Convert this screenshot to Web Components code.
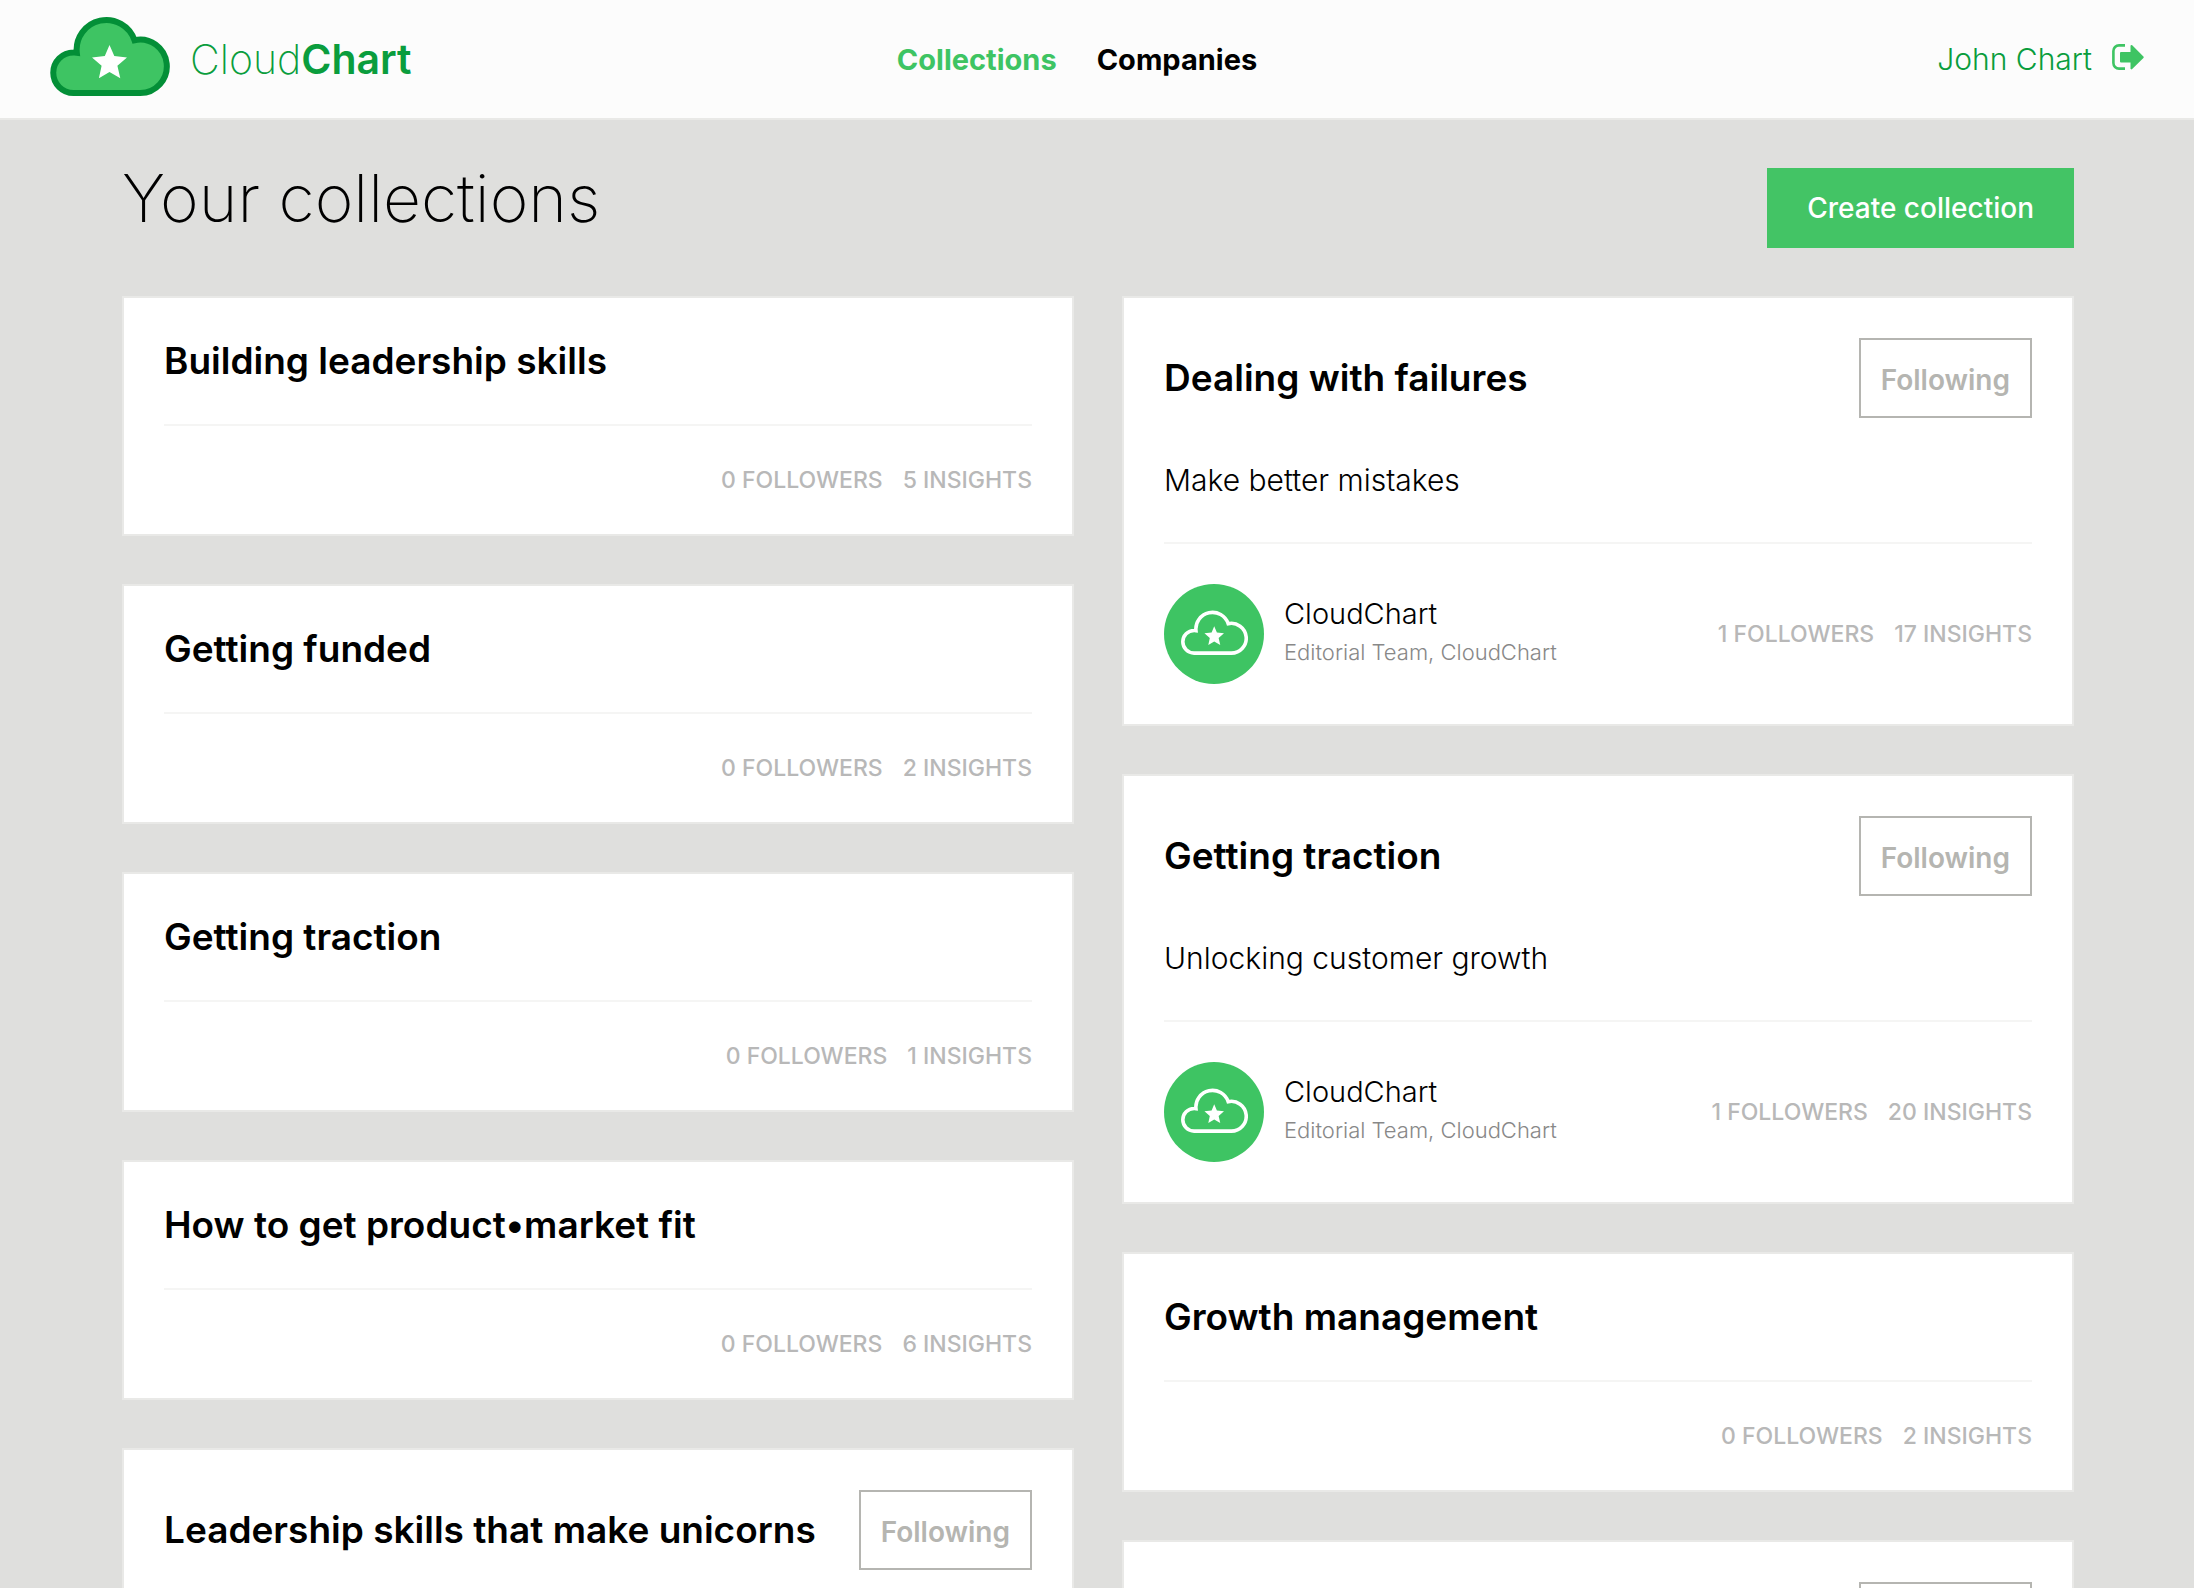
<!DOCTYPE html>
<html lang="en">
<head>
<meta charset="utf-8">
<title>CloudChart – Your collections</title>
<style>
  :root {
    --green: #3ec463;
    --green-deep: #0a9d3d;
    --green-edge: #038f37;
    --page: #dfdfdd;
    --edge: #e9e9e7;
    --muted: #b5b5b1;
    scrollbar-width: none;
  }
  body {
    margin: 0;
    background: var(--page);
    color: #000;
    font-family: Inter, "Open Sans", sans-serif;
  }
</style>
</head>
<body>
<app-header>
  <nav-link slot="nav" href="#collections" current>Collections</nav-link>
  <nav-link slot="nav" href="#companies">Companies</nav-link>
  <span slot="user">John Chart</span>
</app-header>

<collections-page>
  <span slot="title">Your collections</span>
  <span slot="action">Create collection</span>

  <collection-card slot="left" followers="0" insights="5">Building leadership skills</collection-card>
  <collection-card slot="left" followers="0" insights="2">Getting funded</collection-card>
  <collection-card slot="left" followers="0" insights="1">Getting traction</collection-card>
  <collection-card slot="left" followers="0" insights="6">How to get product•market fit</collection-card>
  <collection-card slot="left" following>Leadership skills that make unicorns</collection-card>

  <collection-card slot="right" following followers="1" insights="17">
    Dealing with failures
    <span slot="description">Make better mistakes</span>
    <card-author slot="author" name="CloudChart">Editorial Team, CloudChart</card-author>
  </collection-card>
  <collection-card slot="right" following followers="1" insights="20">
    Getting traction
    <span slot="description">Unlocking customer growth</span>
    <card-author slot="author" name="CloudChart">Editorial Team, CloudChart</card-author>
  </collection-card>
  <collection-card slot="right" followers="0" insights="2">Growth management</collection-card>
  <collection-card slot="right" following></collection-card>
</collections-page>

<script>
class BaseElement extends HTMLElement {
  connectedCallback() {
    if (this.shadowRoot) return;
    this.attachShadow({ mode: 'open' }).innerHTML = this.render();
  }
}

/* Cloud with a star; colours come from --cloud-fill, --cloud-stroke and --cloud-line */
customElements.define('cloud-mark', class extends BaseElement {
  render() {
    return `
    <style>
      :host { display: block; }
      svg { display: block; width: 100%; height: 100%; }
      .cloud { fill: var(--cloud-fill, none); stroke: var(--cloud-stroke, #fff); stroke-width: var(--cloud-line, 6); }
    </style>
    <svg viewBox="0 0 120 80" aria-hidden="true">
      <path class="cloud" d="M23.5 77A20.25 20.25 0 0 1 23.5 36.5Q25 36.4 26.8 36.7A29.7 29.7 0 0 1 84.5 24.2A26.7 26.7 0 1 1 90 77Z"/>
      <path fill="#fff" d="M59.5 29L64.3 40.1L77 41.5L67.4 49.7L70.3 62.3L59.5 56L48.9 62.3L51.6 49.7L42 41.5L54.8 40.1Z"/>
    </svg>`;
  }
});

customElements.define('nav-link', class extends BaseElement {
  render() {
    return `
    <style>
      :host { display: block; margin-right: 40px; }
      a { color: #000; font-size: 29px; font-weight: 700; line-height: 40px; text-decoration: none; }
      :host([current]) a { color: var(--green); }
    </style>
    <a href="${this.getAttribute('href')}"${this.hasAttribute('current') ? ' aria-current="page"' : ''}><slot></slot></a>`;
  }
});

customElements.define('app-header', class extends BaseElement {
  render() {
    return `
    <style>
      :host { display: block; }
      header {
        display: grid; grid-template-columns: 1fr auto 1fr; align-items: center;
        box-sizing: border-box; height: 120px; padding: 0 50px;
        background: #fcfcfc; border-bottom: 2px solid var(--edge);
      }
      .brand {
        display: flex; align-items: center; gap: 20px; justify-self: start;
        color: var(--green-deep); font-size: 41px; font-weight: 200; line-height: 48px; text-decoration: none;
      }
      .brand b { font-weight: 600; }
      cloud-mark {
        width: 120px; height: 80px; margin-bottom: 6px;
        --cloud-fill: var(--green); --cloud-stroke: var(--green-edge);
      }
      nav { display: flex; padding-top: 2px; }
      .user { display: flex; align-items: center; gap: 20px; justify-self: end; }
      .name { color: var(--green-deep); font-size: 30px; font-weight: 300; line-height: 40px; text-decoration: none; }
      button { margin-bottom: 4px; padding: 0; border: 0; background: none; color: var(--green); }
      button svg { display: block; width: 32px; height: 26px; }
    </style>
    <header>
      <a class="brand" href="#home"><cloud-mark></cloud-mark><span>Cloud<b>Chart</b></span></a>
      <nav><slot name="nav"></slot></nav>
      <div class="user">
        <a class="name" href="#profile"><slot name="user"></slot></a>
        <button type="button" aria-label="Log out">
          <svg viewBox="0 0 32 26" aria-hidden="true">
            <path d="M13 1.4H7A5.6 5.6 0 0 0 1.4 7V19A5.6 5.6 0 0 0 7 24.6H13" fill="none" stroke="currentColor" stroke-width="2.6"/>
            <path d="M9 9H19.5V2L30.7 13.2L19.5 24.4V17.4H9Z" fill="currentColor" stroke="currentColor" stroke-width="2" stroke-linejoin="round"/>
          </svg>
        </button>
      </div>
    </header>`;
  }
});

customElements.define('follow-button', class extends BaseElement {
  render() {
    return `
    <style>
      :host { display: block; flex: none; }
      button {
        display: block; box-sizing: border-box; height: 80px; padding: 4px 20px 0;
        border: 2px solid var(--muted); background: #fff; color: var(--muted);
        font: 600 28px/40px Inter, "Open Sans", sans-serif;
      }
    </style>
    <button type="button" aria-pressed="true"><slot></slot></button>`;
  }
});

customElements.define('card-author', class extends BaseElement {
  render() {
    return `
    <style>
      :host { display: flex; align-items: center; gap: 20px; }
      .avatar {
        display: flex; align-items: center; justify-content: center; box-sizing: border-box;
        width: 100px; height: 100px; padding-bottom: 3px; border-radius: 50%; background: var(--green);
      }
      cloud-mark { width: 67px; height: 45px; --cloud-line: 6.4; }
      .text { padding-bottom: 2px; }
      p { margin: 0; font-weight: 300; line-height: 38px; }
      .name { font-size: 29px; }
      .role { color: #888; font-size: 22px; }
    </style>
    <div class="avatar"><cloud-mark></cloud-mark></div>
    <div class="text">
      <p class="name">${this.getAttribute('name')}</p>
      <p class="role"><slot></slot></p>
    </div>`;
  }
});

customElements.define('collection-card', class extends BaseElement {
  render() {
    const following = this.hasAttribute('following');
    const stats = this.hasAttribute('followers');
    const described = this.querySelector('[slot=description]');
    return `
    <style>
      :host { display: block; }
      article { padding: 40px; border: 2px solid var(--edge); background: #fff; }
      .head { display: flex; align-items: center; justify-content: space-between; gap: 20px; }
      h2 { margin: 0; font-size: 37px; font-weight: 600; line-height: 46px; }
      .description { margin: 40px 0 0; font-size: 30px; font-weight: 300; line-height: 44px; }
      footer {
        display: flex; align-items: center; justify-content: space-between;
        margin-top: 40px; padding-top: 40px; border-top: 2px solid #f5f5f4;
      }
      .stats {
        display: flex; gap: 20px; margin: 0 0 0 auto; padding: 0; list-style: none;
        color: #b8b8b8; font-size: 23px; font-weight: 500; line-height: 28px; text-transform: uppercase;
      }
    </style>
    <article>
      <div class="head">
        <h2><slot></slot></h2>
        ${following ? '<follow-button>Following</follow-button>' : ''}
      </div>
      ${described ? '<p class="description"><slot name="description"></slot></p>' : ''}
      ${stats ? `<footer>
        <slot name="author"></slot>
        <ul class="stats">
          <li>${this.getAttribute('followers')} Followers</li>
          <li>${this.getAttribute('insights')} Insights</li>
        </ul>
      </footer>` : ''}
    </article>`;
  }
});

customElements.define('collections-page', class extends BaseElement {
  render() {
    return `
    <style>
      :host { display: block; }
      main { padding: 48px 120px 48px 122px; }
      .top { display: flex; align-items: flex-start; justify-content: space-between; margin-bottom: 48px; }
      h1 { margin: 0; font-size: 66px; font-weight: 200; line-height: 60px; }
      button {
        height: 80px; padding: 0 40px; border: 0; background: #43c465; color: #fff;
        font: 500 28px/40px Inter, "Open Sans", sans-serif;
      }
      .columns { display: grid; grid-template-columns: 1fr 1fr; gap: 48px; align-items: start; }
      section { display: grid; gap: 48px; }
    </style>
    <main>
      <div class="top">
        <h1><slot name="title"></slot></h1>
        <button type="button"><slot name="action"></slot></button>
      </div>
      <div class="columns">
        <section><slot name="left"></slot></section>
        <section><slot name="right"></slot></section>
      </div>
    </main>`;
  }
});
</script>
</body>
</html>
